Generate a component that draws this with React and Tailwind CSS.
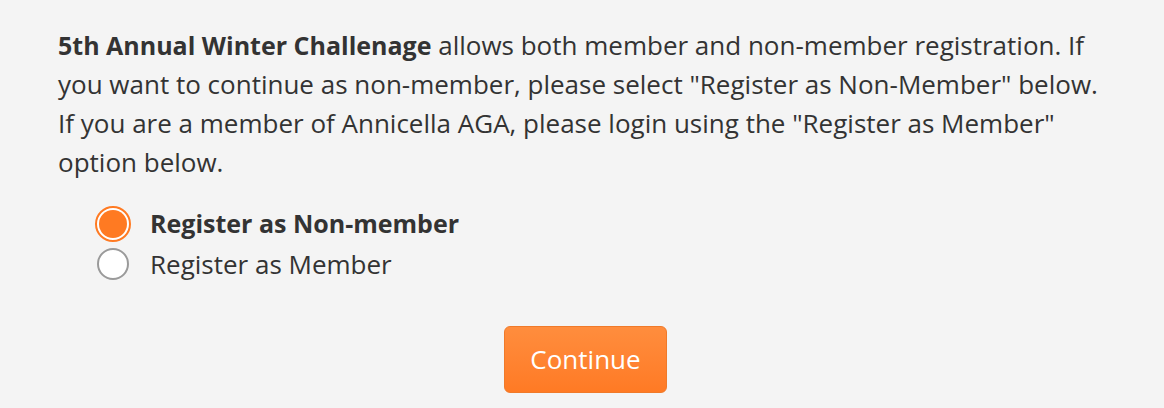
import { useState } from 'react';

export default function App() {
  const [choice, setChoice] = useState('non');
  const options = [
    { id: 'non', label: 'Register as Non-member' },
    { id: 'member', label: 'Register as Member' },
  ];

  return (
    <div className="min-h-[408px] bg-[#f4f4f4] text-[#333333] pl-[58px] pr-[40px] pt-[26px]"
      style={{ fontFamily: '"Open Sans", Lato, sans-serif' }}>
      <p className="text-[26px] leading-[39px] whitespace-nowrap">
        <b className="font-bold text-[25px]">5th Annual Winter Challenage</b> allows both member and non-member registration. If<br />
        you want to continue as non-member, please select "Register as Non-Member" below.<br />
        If you are a member of Annicella AGA, please login using the "Register as Member"<br />
        option below.
      </p>

      <div className="mt-[26px] pl-[38px] flex flex-col gap-[8px]">
        {options.map(o => {
          const on = choice === o.id;
          return (
            <label key={o.id} onClick={() => setChoice(o.id)} className="flex items-center gap-[20px] h-[32px] cursor-pointer">
              {on ? (
                <span className="w-[36px] h-[36px] -mx-[1px] rounded-full border-[2px] border-[#ff7a22] bg-white p-[2px] flex-shrink-0">
                  <span className="block w-full h-full rounded-full bg-[#ff7a22]" />
                </span>
              ) : (
                <span className="w-[32px] h-[32px] mx-[1px] rounded-full border-[2px] border-[#9a9a9a] bg-white flex-shrink-0" />
              )}
              <span className={on ? 'text-[25px] font-bold' : 'text-[26px]'}>{o.label}</span>
            </label>
          );
        })}
      </div>

      <div className="flex justify-center mt-[46px] pr-[11px]">
        <button className="w-[163px] h-[67px] rounded-[6px] text-white text-[26px] bg-gradient-to-b from-[#ff8d3d] to-[#ff7a24] border border-[#f07a2a]">
          Continue
        </button>
      </div>
    </div>
  );
}
